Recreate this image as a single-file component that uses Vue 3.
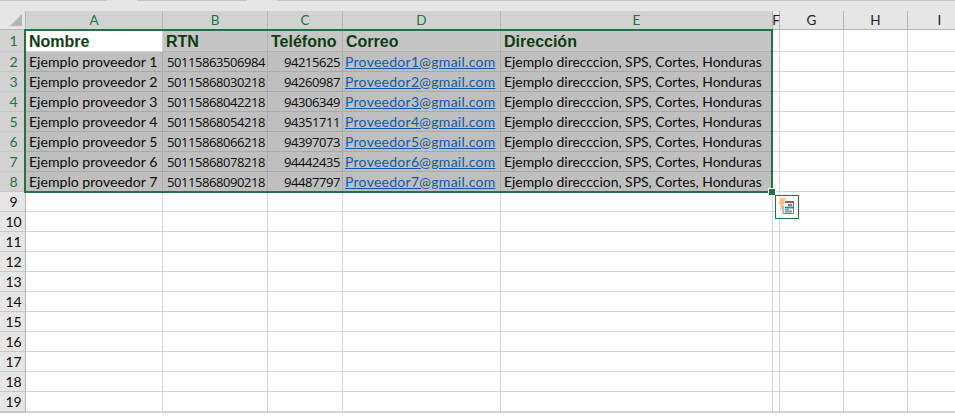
<script setup>
const columns = [
  { label: 'A', selected: true },
  { label: 'B', selected: true },
  { label: 'C', selected: true },
  { label: 'D', selected: true },
  { label: 'E', selected: true },
  { label: 'F', selected: false },
  { label: 'G', selected: false },
  { label: 'H', selected: false },
  { label: 'I', selected: false }
]
const heads = ['Nombre', 'RTN', 'Teléfono', 'Correo', 'Dirección']
const data = [
  ['50115863506984', '94215625'],
  ['50115868030218', '94260987'],
  ['50115868042218', '94306349'],
  ['50115868054218', '94351711'],
  ['50115868066218', '94397073'],
  ['50115868078218', '94442435'],
  ['50115868090218', '94487797']
]
const emptyRows = Array.from({ length: 11 }, (_, i) => i + 9)
</script>

<template>
  <div class="page">
    <div class="ribbon">
      <div class="tab t1"></div>
      <div class="tab t2"></div>
      <div class="tab t3"></div>
    </div>
    <div class="sheet">
      <div class="corner"><span class="tri"></span></div>
      <div v-for="c in columns" :key="c.label" class="colh" :class="{ sel: c.selected }">{{ c.label }}</div>

      <div class="rowh sel">1</div>
      <div v-for="(h, i) in heads" :key="h" class="cell head" :class="i === 0 ? 'active' : 'shade1'">{{ h }}</div>
      <div class="cell"></div><div class="cell"></div><div class="cell"></div><div class="cell"></div>

      <template v-for="(d, i) in data" :key="i">
        <div class="rowh sel">{{ i + 2 }}</div>
        <div class="cell shade name">Ejemplo proveedor {{ i + 1 }}</div>
        <div class="cell shade num">{{ d[0] }}</div>
        <div class="cell shade num">{{ d[1] }}</div>
        <div class="cell shade mail"><a class="link">Proveedor{{ i + 1 }}@gmail.com</a></div>
        <div class="cell shade addr">Ejemplo direcccion, SPS, Cortes, Honduras</div>
        <div class="cell"></div><div class="cell"></div><div class="cell"></div><div class="cell"></div>
      </template>

      <template v-for="n in emptyRows" :key="n">
        <div class="rowh">{{ n }}</div>
        <div v-for="c in columns" :key="c.label" class="cell"></div>
      </template>

      <div class="rowh"></div>
      <div v-for="c in columns" :key="c.label" class="cell"></div>

      <div class="selection"><span class="handle"></span></div>
      <div class="smart">
        <svg width="20" height="20" viewBox="0 0 20 20">
          <path d="M3.5 1h5.5L7 5.5h2.5L2.5 14l1.5-6.5H1.5z" fill="#f5c27a" />
          <path d="M8 4.5h8.5v12H6V9" fill="#fff" stroke="#7a7a7a" stroke-width="1" />
          <rect x="8" y="4" width="9" height="2" fill="#6b6b6b" />
          <rect x="11" y="7" width="4" height="2" fill="#e2543c" />
          <rect x="8" y="9.5" width="8" height="2" fill="#2f80cc" />
          <rect x="8" y="12" width="4" height="1" fill="#8a8a8a" />
          <rect x="8" y="13.5" width="7" height="2" fill="#5fa491" />
        </svg>
      </div>
    </div>
  </div>
</template>

<style>
html, body { margin: 0; background: #fff; overflow: hidden; }
</style>

<style scoped>
.page {
  width: 955px;
  height: 416px;
  overflow: hidden;
  font-family: Lato, "Liberation Sans", sans-serif;
  font-size: 14px;
  color: #0a0a0a;
  background: #fff;
}
.ribbon {
  height: 11px;
  background: #e6e6e6;
  display: flex;
  gap: 30px;
  align-items: flex-start;
}
.tab { height: 1px; background: #c6c6c6; }
.t1 { width: 107px; }
.t2 { width: 110px; }
.t3 { flex: 1; }
.sheet {
  position: relative;
  display: grid;
  grid-template-columns: 26px 137px 105px 75px 158px 272px 7px 64px 64px 64px;
  grid-template-rows: 19px 22px repeat(18, 20px);
  width: 972px;
}
.corner, .colh {
  background: #e6e6e6;
  border-right: 1px solid #b4b4b4;
  border-bottom: 1px solid #b4b4b4;
  box-sizing: border-box;
}
.corner { position: relative; }
.tri {
  position: absolute;
  right: 3px;
  bottom: 3px;
  width: 0;
  height: 0;
  border-left: 12px solid transparent;
  border-bottom: 12px solid #b4b4b4;
}
.colh {
  display: flex;
  align-items: center;
  justify-content: center;
  font-size: 13.5px;
  line-height: 18px;
  color: #222;
}
.colh.sel { background: #d2d2d2; color: #217346; }
.rowh {
  background: #e6e6e6;
  border-right: 1px solid #b4b4b4;
  border-bottom: 1px solid #c6c6c6;
  box-sizing: border-box;
  display: flex;
  align-items: center;
  justify-content: center;
  padding-left: 2px;
  line-height: 18px;
}
.rowh.sel { background: #d2d2d2; color: #217346; }
.cell {
  border-right: 1px solid #d4d4d4;
  border-bottom: 1px solid #d4d4d4;
  box-sizing: border-box;
  padding: 0 3px;
  white-space: nowrap;
  overflow: hidden;
  display: flex;
  align-items: center;
  line-height: 18px;
  font-size: 14px;
}
.shade { background: #bfbfbf; border-color: #a9a9a9; }
.shade1 { background: #c6c6c6; border-color: #b0b0b0; }
.active { background: #fff; }
.head {
  font-family: "Liberation Sans", sans-serif;
  font-weight: 700;
  font-size: 16px;
  color: #0f3d0f;
  padding-left: 3px;
  padding-top: 3px;
}
.name { font-size: 14.1px; }
.mail { font-size: 14px; padding-left: 2px; letter-spacing: 0.27px; }
.addr { font-size: 13.9px; padding-left: 3px; }
.num {
  justify-content: flex-end;
  padding-right: 2px;
  font-family: "Open Sans", sans-serif;
  font-size: 13px;
  letter-spacing: -0.43px;
}
.link { color: #0f5aa8; text-decoration: underline; }
.selection {
  position: absolute;
  left: 24px;
  top: 18px;
  width: 749px;
  height: 164px;
  border: 2px solid #217346;
  box-sizing: border-box;
  pointer-events: none;
}
.handle {
  position: absolute;
  right: -5px;
  bottom: -5px;
  width: 6px;
  height: 6px;
  background: #217346;
  border: 1px solid #fff;
}
.smart {
  position: absolute;
  left: 775px;
  top: 184px;
  width: 24px;
  height: 24px;
  box-sizing: border-box;
  border: 1px solid #217346;
  background: #fff;
  display: flex;
  align-items: center;
  justify-content: center;
}
</style>
